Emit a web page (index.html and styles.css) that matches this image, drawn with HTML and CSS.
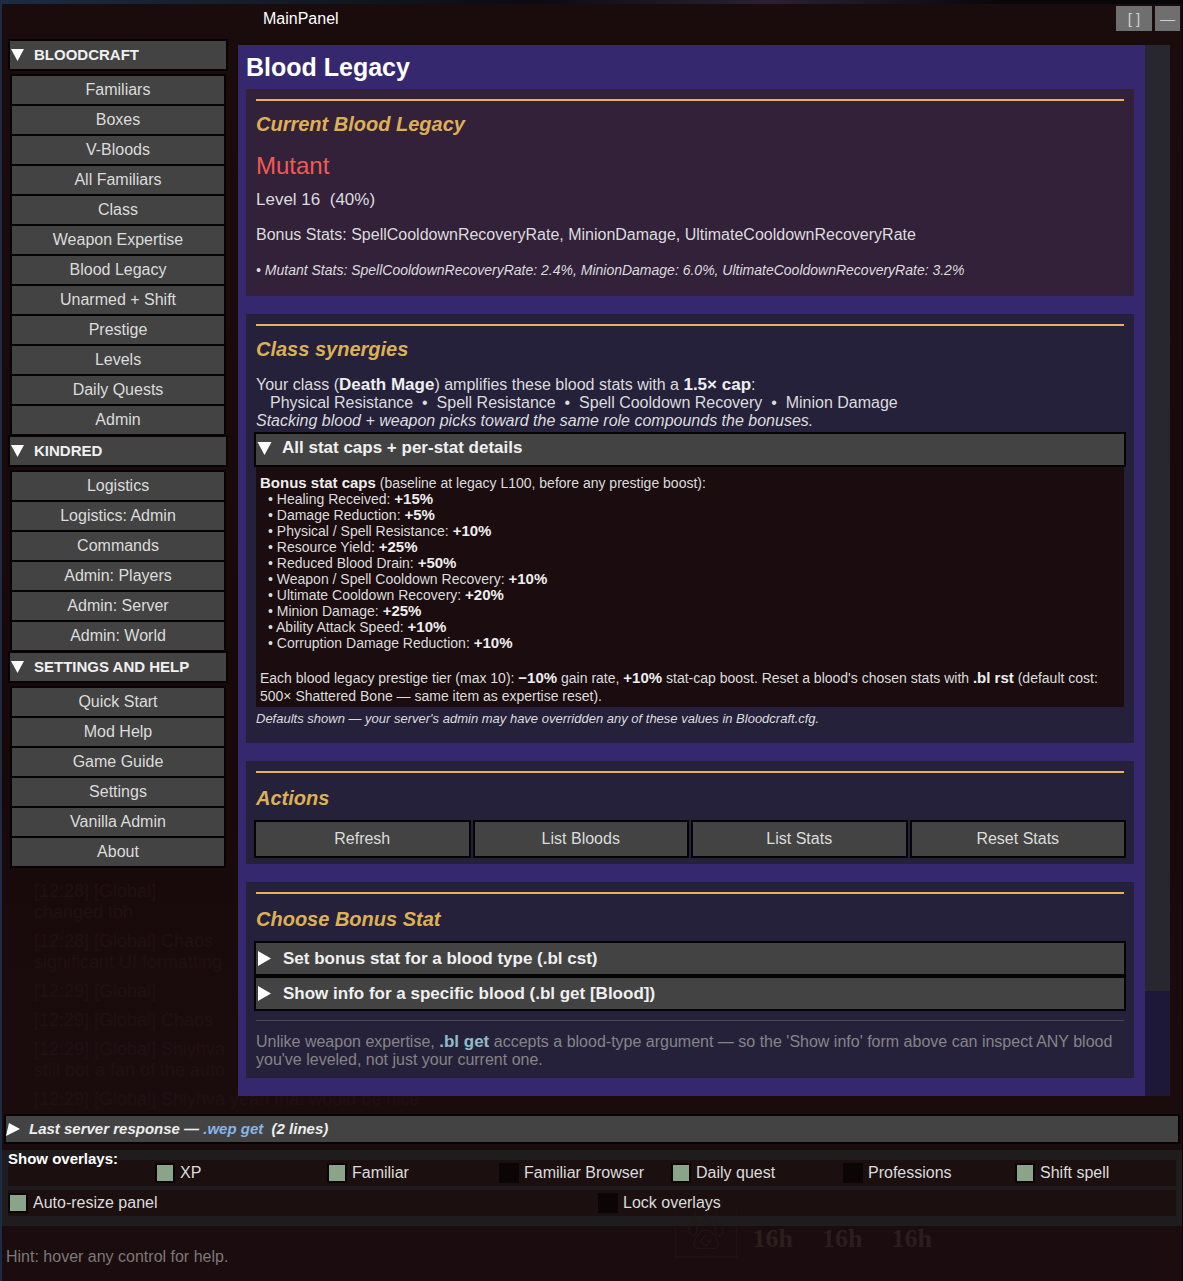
FILE: index.html
```html
<!DOCTYPE html>
<html lang="en">
<head>
<meta charset="utf-8">
<title>MainPanel</title>
<link rel="stylesheet" href="styles.css">
</head>
<body>
<div class="panel">
  <header class="titlebar">
    <h1 class="titlebar-name">MainPanel</h1>
    <button class="window-button window-button-wide" type="button" aria-label="Resize">[ ]</button>
    <button class="window-button" type="button" aria-label="Minimise">—</button>
  </header>

  <div class="columns">
    <nav class="sidebar">
      <details class="group" open>
        <summary class="bar group-head"><svg class="arrow-down" viewBox="0 0 13 12" aria-hidden="true"><path d="M0 0H13L6.5 12Z"/></svg>BLOODCRAFT</summary>
        <div class="group-items">
          <button class="nav-item" type="button">Familiars</button>
          <button class="nav-item" type="button">Boxes</button>
          <button class="nav-item" type="button">V-Bloods</button>
          <button class="nav-item" type="button">All Familiars</button>
          <button class="nav-item" type="button">Class</button>
          <button class="nav-item" type="button">Weapon Expertise</button>
          <button class="nav-item" type="button">Blood Legacy</button>
          <button class="nav-item" type="button">Unarmed + Shift</button>
          <button class="nav-item" type="button">Prestige</button>
          <button class="nav-item" type="button">Levels</button>
          <button class="nav-item" type="button">Daily Quests</button>
          <button class="nav-item" type="button">Admin</button>
        </div>
      </details>
      <details class="group" open>
        <summary class="bar group-head"><svg class="arrow-down" viewBox="0 0 13 12" aria-hidden="true"><path d="M0 0H13L6.5 12Z"/></svg>KINDRED</summary>
        <div class="group-items">
          <button class="nav-item" type="button">Logistics</button>
          <button class="nav-item" type="button">Logistics: Admin</button>
          <button class="nav-item" type="button">Commands</button>
          <button class="nav-item" type="button">Admin: Players</button>
          <button class="nav-item" type="button">Admin: Server</button>
          <button class="nav-item" type="button">Admin: World</button>
        </div>
      </details>
      <details class="group" open>
        <summary class="bar group-head"><svg class="arrow-down" viewBox="0 0 13 12" aria-hidden="true"><path d="M0 0H13L6.5 12Z"/></svg>SETTINGS AND HELP</summary>
        <div class="group-items">
          <button class="nav-item" type="button">Quick Start</button>
          <button class="nav-item" type="button">Mod Help</button>
          <button class="nav-item" type="button">Game Guide</button>
          <button class="nav-item" type="button">Settings</button>
          <button class="nav-item" type="button">Vanilla Admin</button>
          <button class="nav-item" type="button">About</button>
        </div>
      </details>
      <div class="game-chat" aria-hidden="true">
        <p>[12:28] [Global]<br>changed tbh</p>
        <p>[12:28] [Global] Chaos<br>significant UI formatting</p>
        <p>[12:29] [Global]</p>
        <p>[12:29] [Global] Chaos</p>
        <p>[12:29] [Global] Shiyhva<br>still bot a fan of the auto</p>
        <p>[12:29] [Global] Shiyhva yeah that would be nice</p>
      </div>
    </nav>

    <main class="content">
      <div class="page">
        <h2 class="page-title">Blood Legacy</h2>

        <section class="card card-current">
          <h3 class="card-title">Current Blood Legacy</h3>
          <p class="blood-name">Mutant</p>
          <p class="level">Level 16&nbsp; (40%)</p>
          <p class="bonus">Bonus Stats: SpellCooldownRecoveryRate, MinionDamage, UltimateCooldownRecoveryRate</p>
          <p class="blood-stats">• Mutant Stats: SpellCooldownRecoveryRate: 2.4%, MinionDamage: 6.0%, UltimateCooldownRecoveryRate: 3.2%</p>
        </section>

        <section class="card card-class">
          <h3 class="card-title">Class synergies</h3>
          <p class="synergy">Your class (<b>Death Mage</b>) amplifies these blood stats with a <b>1.5× cap</b>:</p>
          <p class="synergy synergy-stats">Physical Resistance&nbsp; •&nbsp; Spell Resistance&nbsp; •&nbsp; Spell Cooldown Recovery&nbsp; •&nbsp; Minion Damage</p>
          <p class="synergy"><i>Stacking blood + weapon picks toward the same role compounds the bonuses.</i></p>
          <details class="caps" open>
            <summary class="bar fold"><svg class="arrow-down fold-down" viewBox="0 0 13 12" aria-hidden="true"><path d="M0 0H13L6.5 12Z"/></svg>All stat caps + per-stat details</summary>
            <div class="caps-body">
              <p><b>Bonus stat caps</b> (baseline at legacy L100, before any prestige boost):</p>
              <ul class="caps-list">
                <li>• Healing Received: <b>+15%</b></li>
                <li>• Damage Reduction: <b>+5%</b></li>
                <li>• Physical / Spell Resistance: <b>+10%</b></li>
                <li>• Resource Yield: <b>+25%</b></li>
                <li>• Reduced Blood Drain: <b>+50%</b></li>
                <li>• Weapon / Spell Cooldown Recovery: <b>+10%</b></li>
                <li>• Ultimate Cooldown Recovery: <b>+20%</b></li>
                <li>• Minion Damage: <b>+25%</b></li>
                <li>• Ability Attack Speed: <b>+10%</b></li>
                <li>• Corruption Damage Reduction: <b>+10%</b></li>
              </ul>
              <p class="caps-note">Each blood legacy prestige tier (max 10): <b>−10%</b> gain rate, <b>+10%</b> stat-cap boost. Reset a blood's chosen stats with <b>.bl rst</b> (default cost: 500× Shattered Bone — same item as expertise reset).</p>
            </div>
          </details>
          <p class="defaults">Defaults shown — your server's admin may have overridden any of these values in Bloodcraft.cfg.</p>
        </section>

        <section class="card card-actions">
          <h3 class="card-title card-title-low">Actions</h3>
          <div class="actions">
            <button class="bar action" type="button">Refresh</button>
            <button class="bar action" type="button">List Bloods</button>
            <button class="bar action" type="button">List Stats</button>
            <button class="bar action" type="button">Reset Stats</button>
          </div>
        </section>

        <section class="card card-choose">
          <h3 class="card-title card-title-low">Choose Bonus Stat</h3>
          <div class="choices">
            <details>
              <summary class="bar fold"><svg class="arrow-right" viewBox="0 0 13 15" aria-hidden="true"><path d="M0 0L13 7.5L0 15Z"/></svg>Set bonus stat for a blood type (.bl cst)</summary>
            </details>
            <details>
              <summary class="bar fold"><svg class="arrow-right" viewBox="0 0 13 15" aria-hidden="true"><path d="M0 0L13 7.5L0 15Z"/></svg>Show info for a specific blood (.bl get [Blood])</summary>
            </details>
          </div>
          <p class="usage">Unlike weapon expertise, <b>.bl get</b> accepts a blood-type argument — so the 'Show info' form above can inspect ANY blood you've leveled, not just your current one.</p>
        </section>
      </div>
      <div class="scroll-track"><div class="scroll-thumb"></div></div>
    </main>
  </div>

  <details class="response">
    <summary class="bar response-head"><svg class="arrow-right arrow-slanted" viewBox="0 0 14 13" aria-hidden="true"><path d="M3 0L14 6L0 13Z"/></svg><span>Last server response — <em>.wep get</em>&nbsp; (2 lines)</span></summary>
  </details>

  <section class="overlays">
    <div class="overlay-row overlay-row-six">
      <h2 class="overlays-title">Show overlays:</h2>
      <label class="toggle"><input type="checkbox" checked>XP</label>
      <label class="toggle"><input type="checkbox" checked>Familiar</label>
      <label class="toggle"><input type="checkbox">Familiar Browser</label>
      <label class="toggle"><input type="checkbox" checked>Daily quest</label>
      <label class="toggle"><input type="checkbox">Professions</label>
      <label class="toggle"><input type="checkbox" checked>Shift spell</label>
    </div>
    <div class="overlay-row overlay-row-two">
      <label class="toggle"><input type="checkbox" checked>Auto-resize panel</label>
      <label class="toggle"><input type="checkbox">Lock overlays</label>
    </div>
  </section>

  <footer class="hint">
    <p>Hint: hover any control for help.</p>
    <div class="game-buffs" aria-hidden="true">
      <svg class="paw" viewBox="0 0 62 48"><path d="M0 0V47H62V0"/><ellipse cx="25" cy="5" rx="5" ry="9"/><ellipse cx="37" cy="5" rx="5" ry="9"/><ellipse cx="18" cy="19" rx="4" ry="7"/><ellipse cx="44" cy="19" rx="4" ry="7"/><path d="M31 20C24 20 19 30 19 34C20 41 26 38 31 38C36 38 42 41 43 34C43 30 38 20 31 20ZM31 25L25 31L31 36L36 31H31"/></svg>
      <span>16h</span><span>16h</span><span>16h</span>
    </div>
  </footer>
</div>
</body>
</html>
```

FILE: styles.css
```css
* {
  box-sizing: border-box;
}

body {
  margin: 0;
  padding: 4px 1px 0 2px;
  min-height: 100vh;
  background: linear-gradient(90deg, #1b2c44, #0a0c10 45%, #2a2036 65%, #070709 85%);
  color: #dcdcdc;
  font-family: "Liberation Sans", Arial, sans-serif;
  font-size: 16px;
  line-height: 18px;
}

h1, h2, h3, p, ul {
  margin: 0;
  padding: 0;
}

button {
  font: inherit;
  color: inherit;
  padding: 0;
}

summary {
  list-style: none;
  cursor: pointer;
}

b {
  color: #eeeeee;
}

.panel {
  display: flex;
  flex-direction: column;
  min-height: calc(100vh - 4px);
  background: linear-gradient(180deg, #1a0c0c, #180909 60%, #1b0c0f);
}

/* Title bar */
.titlebar {
  display: flex;
  align-items: flex-start;
  gap: 3px;
  height: 35px;
  padding: 2px 2px 0 261px;
}

.titlebar-name {
  flex: 1;
  color: #ffffff;
  font-size: 16px;
  font-weight: 400;
  line-height: 26px;
}

.window-button {
  width: 25px;
  height: 25px;
  border: 0;
  background: #6f6f6f;
  color: #d0d0d0;
  font-size: 15px;
}

.window-button-wide {
  width: 36px;
}

/* Columns */
.columns {
  display: grid;
  grid-template-columns: 220px minmax(0, 1fr);
  gap: 10px;
  padding: 0 12px 0 6px;
}

.bar {
  display: flex;
  align-items: center;
  border: 2px solid #060305;
  background: #434343;
}

.arrow-down {
  width: 13px;
  height: 12px;
  fill: #ffffff;
}

.arrow-right {
  width: 13px;
  height: 15px;
  fill: #ffffff;
}

/* Sidebar */
.sidebar {
  position: relative;
}

.group {
  margin-bottom: -1px;
}

.group-head {
  position: relative;
  gap: 10px;
  height: 32px;
  padding-left: 1px;
  color: #f0f0f0;
  font-size: 15px;
  font-weight: 700;
}

.group-items {
  display: flex;
  flex-direction: column;
  gap: 2px;
  margin: 3px 2px 0;
  padding: 2px;
  background: #060305;
}

.nav-item {
  height: 28px;
  border: 0;
  background: #434343;
}

/* The game's chat log, barely visible through the panel */
.game-chat {
  position: absolute;
  top: 842px;
  left: 26px;
  width: 420px;
  color: #1f1113;
  font-size: 18px;
  line-height: 21px;
}

.game-chat p {
  margin-bottom: 8px;
}

/* Content */
.content {
  position: relative;
  display: flex;
  margin-top: 6px;
}

.page {
  display: flex;
  flex-direction: column;
  flex: 1;
  min-width: 0;
  gap: 18px;
  padding: 8px 11px 18px 8px;
  background: #35286f;
}

.page-title {
  margin-bottom: -10px;
  color: #ffffff;
  font-size: 25px;
  line-height: 28px;
}

.scroll-track {
  width: 25px;
  background: #1e1838;
}

.scroll-thumb {
  height: 90%;
  background: #28272f;
}

.card {
  padding: 10px;
  background: #25213b;
}

.card-current {
  padding-bottom: 16px;
  background: #33213a;
}

.card-class {
  padding-bottom: 15px;
}

.card-actions {
  padding-bottom: 6px;
}

.card-choose {
  padding-bottom: 9px;
}

.card-title {
  padding-top: 11px;
  border-top: 2px solid #ecb05a;
  color: #ddb055;
  font-size: 20px;
  font-style: italic;
  line-height: 24px;
}

.card-title-low {
  padding-top: 13px;
}

.blood-name {
  margin-top: 16px;
  color: #f05a55;
  font-size: 24px;
  line-height: 28px;
}

.level {
  margin-top: 10px;
  font-size: 17px;
  line-height: 20px;
}

.bonus {
  margin-top: 15px;
  line-height: 20px;
}

.blood-stats {
  margin-top: 15px;
  font-size: 14px;
  font-style: italic;
  line-height: 20px;
}

.card-title + .synergy {
  margin-top: 15px;
}

.synergy b {
  font-size: 17px;
  line-height: 18px;
}

.synergy-stats {
  padding-left: 14px;
}

.fold {
  gap: 12px;
  height: 35px;
  padding-left: 2px;
  color: #f0f0f0;
  font-size: 17px;
  font-weight: 700;
}

.fold-down {
  width: 15px;
  height: 13px;
}

.caps {
  margin-top: 2px;
}

.caps .fold {
  gap: 10px;
  padding: 0 0 3px 1px;
  margin: 0 -2px;
}

.caps-body {
  padding: 8px 4px 2px;
  background: #1b0c0f;
  font-size: 14px;
  line-height: 16px;
}

.caps-body b {
  font-size: 15px;
}

.caps-list {
  padding-left: 8px;
  list-style: none;
}

.caps-note {
  margin-top: 18px;
  line-height: 18px;
}

.defaults {
  margin-top: 3px;
  font-size: 13px;
  font-style: italic;
}

.actions {
  display: grid;
  grid-template-columns: repeat(4, 1fr);
  gap: 2px;
  margin: 10px -2px 0;
}

.action {
  justify-content: center;
  height: 38px;
}

.choices {
  margin: 10px -2px 9px;
}

.usage {
  padding-top: 12px;
  border-top: 1px solid #4a4651;
  color: #858585;
}

.usage b {
  color: #8fbccb;
  font-size: 17px;
}

/* Last response */
.response {
  margin: 18px 2px 0;
}

.response-head {
  position: relative;
  gap: 9px;
  height: 30px;
  color: #eeeeee;
  font-size: 15px;
  font-style: italic;
  font-weight: 700;
}

.response-head em {
  color: #86b4ec;
}

.arrow-slanted {
  width: 14px;
  height: 13px;
}

/* Overlay switches */
.overlays {
  display: flex;
  flex-direction: column;
  gap: 4px;
  margin-top: 6px;
  padding: 10px 6px;
  background: #1e1c1d;
}

.overlay-row {
  display: grid;
  align-items: center;
  height: 26px;
  background: #1b0f10;
}

.overlay-row-six {
  grid-template-columns: 136px repeat(6, minmax(0, 1fr));
  gap: 11px;
}

.overlay-row-two {
  grid-template-columns: repeat(2, minmax(0, 1fr));
  gap: 12px;
}

.overlays-title {
  align-self: start;
  margin-top: -10px;
  color: #ffffff;
  font-size: 15px;
}

.toggle {
  display: flex;
  align-items: center;
  gap: 5px;
  white-space: nowrap;
}

.toggle input {
  appearance: none;
  width: 20px;
  height: 20px;
  margin: 0;
  border: 2px solid #0c0506;
  background: #0c0506;
}

.toggle input:checked {
  background: #8aa48a;
}

/* Hint line */
.hint {
  position: relative;
  padding: 22px 4px 0;
  color: #7d7878;
}

/* The game's buff timers, barely visible through the panel */
.game-buffs {
  position: absolute;
  top: -16px;
  left: 57%;
  display: flex;
  align-items: flex-end;
  gap: 29px;
  color: #2a1f1e;
  font-family: "Liberation Serif", serif;
  font-size: 26px;
  font-weight: 700;
  line-height: 38px;
}

.paw {
  width: 62px;
  height: 48px;
  margin-right: -13px;
  fill: none;
  stroke: #231819;
}
```
